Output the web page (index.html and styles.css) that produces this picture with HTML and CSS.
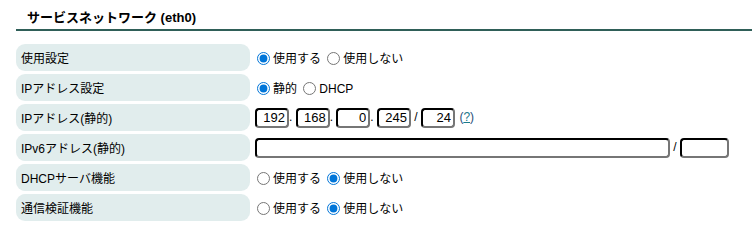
FILE: index.html
```html
<!DOCTYPE html>
<html lang="ja">
<head>
  <meta charset="UTF-8" />
  <title>サービスネットワーク</title>
  <link rel="stylesheet" href="styles.css">
</head>
<body>

  <h2 class="title">サービスネットワーク (eth0)</h2>

  <table class="form">
    <tr>
      <th>使用設定</th>
      <td>
        <label><input type="radio" name="use" checked>使用する</label>
        <label><input type="radio" name="use">使用しない</label>
      </td>
    </tr>
    <tr>
      <th>IPアドレス設定</th>
      <td>
        <label><input type="radio" name="mode" checked>静的</label>
        <label><input type="radio" name="mode">DHCP</label>
      </td>
    </tr>
    <tr>
      <th>IPアドレス(静的)</th>
      <td>
        <input type="text" class="oct" value="192">.
        <input type="text" class="oct" value="168">.
        <input type="text" class="oct" value="0">.
        <input type="text" class="oct" value="245"> /
        <input type="text" class="oct" value="24">
        <span class="hint">(<a href="#" class="help">?</a>)</span>
      </td>
    </tr>
    <tr>
      <th>IPv6アドレス(静的)</th>
      <td>
        <input type="text" class="v6"> /
        <input type="text" class="prefix">
      </td>
    </tr>
    <tr>
      <th>DHCPサーバ機能</th>
      <td>
        <label><input type="radio" name="dhcp">使用する</label>
        <label><input type="radio" name="dhcp" checked>使用しない</label>
      </td>
    </tr>
    <tr>
      <th>通信検証機能</th>
      <td>
        <label><input type="radio" name="check">使用する</label>
        <label><input type="radio" name="check" checked>使用しない</label>
      </td>
    </tr>
  </table>

</body>
</html>
```

FILE: styles.css
```css
body { margin: 0; padding: 0 0 0 16px; font-family: "Liberation Sans", Arial, "Noto Sans CJK JP", sans-serif; font-size: 12px; color: #000; }
.title { margin: 0; padding: 11px 0 5px 11px; font-size: 13px; font-weight: bold; border-bottom: 2px solid #2f5f58; line-height: 13px; }
.form { border-collapse: separate; border-spacing: 0 3px; margin-top: 10px; margin-left: 0; }
.form th { width: 229px; height: 27px; padding: 0 0 0 5px; background: #e1eded; border-radius: 9px; font-weight: normal; text-align: left; }
.form td { padding: 0 0 0 2px; white-space: nowrap; }
.form input[type=radio] { margin: 0 3px 0 3px; width: 13px; height: 13px; vertical-align: -2px; accent-color: #0075d8; }
.form td > label:first-child input[type=radio] { margin-left: 5px; }
.form input[type=text] { height: 14px; padding: 1px 2px; border: 2px inset #767676; border-top-color: #1a1a1a; border-left-color: #1a1a1a; border-radius: 4px; font: 13px "Liberation Sans", Arial, sans-serif; color: #000; text-align: right; vertical-align: middle; margin: 0; }
.form .oct { width: 26px; }
.form td > .oct:first-child, .form td > .v6:first-child { margin-left: 3px; }
.form .v6 { width: 407px; }
.form .prefix { width: 41px; }
.hint { color: #1f4e79; margin-left: 1px; }
.help { color: #1a7a8a; }
```
